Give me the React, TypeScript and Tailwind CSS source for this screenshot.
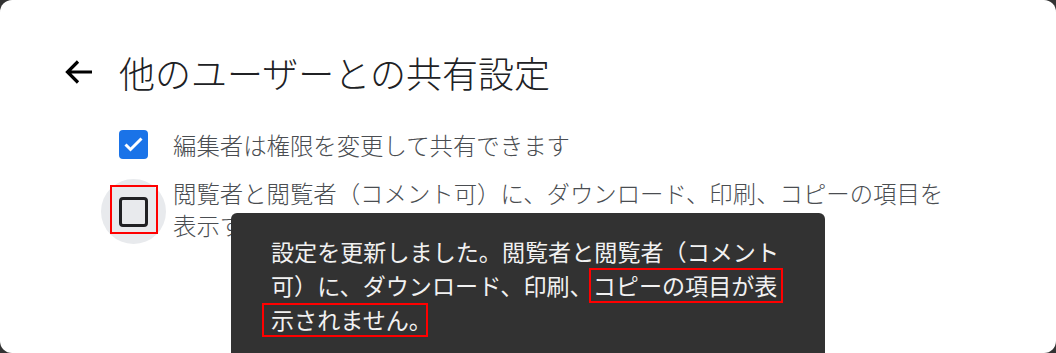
import React from 'react'

const Annotation: React.FC<{ className: string }> = ({ className }) => (
  <div className={`absolute border-2 border-[#ff0000] ${className}`} />
)

const BackArrow = () => (
  <svg width="28" height="24" viewBox="0 0 28 24" className="shrink-0">
    <path
      d="M27 12H3M13 1.5L2.5 12 13 22.5"
      fill="none"
      stroke="#000"
      strokeWidth="3.2"
    />
  </svg>
)

const CheckedBox = () => (
  <div className="w-[29px] h-[29px] rounded-[4px] bg-[#1a73e8] flex items-center justify-center">
    <svg width="29" height="29" viewBox="0 0 29 29">
      <path
        d="M6.5 14.5l5 5 11-11"
        fill="none"
        stroke="#fff"
        strokeWidth="3"
      />
    </svg>
  </div>
)

const EmptyBox = () => (
  <div className="w-[29px] h-[30px] rounded-[4px] border-[3px] border-[#202124]" />
)

export default function App() {
  return (
    <div className="w-[1056px] h-[353px] bg-[#333] font-['Noto_Sans_CJK_JP','Noto_Sans',sans-serif]">
      <div className="relative h-full rounded-[12px] bg-white overflow-hidden">
        {/* header */}
        <div className="flex items-center pl-[65px] pt-[50px]">
          <BackArrow />
          <h1 className="ml-[26px] text-[36px] leading-[44px] text-[#202124] font-light">
            他のユーザーとの共有設定
          </h1>
        </div>

        {/* options */}
        <div className="mt-[18px] pl-[101px]">
          <div className="flex items-center h-[65px]">
            <div className="w-[65px] h-[65px] flex items-center justify-center">
              <CheckedBox />
            </div>
            <span className="ml-[7px] text-[23.4px] leading-[32px] text-[#4a4d51] font-light">
              編集者は権限を変更して共有できます
            </span>
          </div>

          <div className="flex items-start">
            <div className="mt-[2px] w-[65px] h-[65px] rounded-full bg-[#e8eaed] flex items-center justify-center">
              <EmptyBox />
            </div>
            <p className="ml-[7px] w-[785px] text-[23.4px] leading-[32px] text-[#4a4d51] font-light">
              閲覧者と閲覧者（コメント可）に、ダウンロード、印刷、コピーの項目を表示する
            </p>
          </div>
        </div>

        {/* snackbar */}
        <div className="absolute left-[231px] top-[213px] bottom-0 w-[594px] rounded-t-[6px] bg-[#323232] px-[40px] pt-[21px]">
          <p className="text-[23.1px] leading-[34px] text-[#f1f1f1]">
            設定を更新しました。閲覧者と閲覧者（コメント可）に、ダウンロード、印刷、コピーの項目が表示されません。
          </p>
        </div>

        <Annotation className="left-[110px] top-[185px] w-[48px] h-[49px]" />
        <Annotation className="left-[589px] top-[268px] w-[194px] h-[35px]" />
        <Annotation className="left-[262px] top-[303px] w-[166px] h-[34px]" />
      </div>
    </div>
  )
}
